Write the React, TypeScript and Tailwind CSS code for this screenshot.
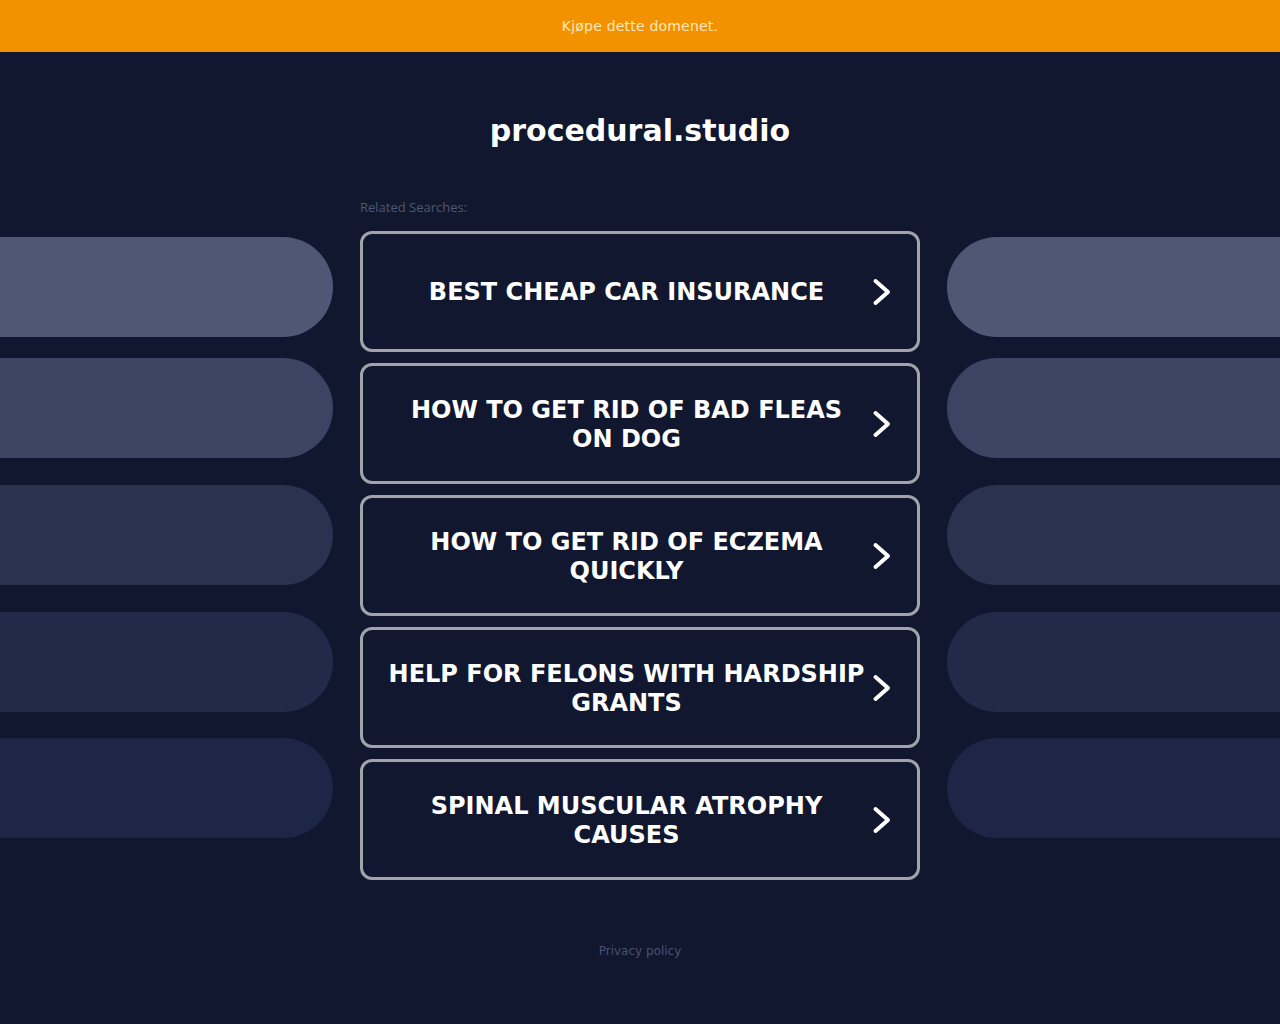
import React from "react";

const items = [
  "BEST CHEAP CAR INSURANCE",
  "HOW TO GET RID OF BAD FLEAS ON DOG",
  "HOW TO GET RID OF ECZEMA QUICKLY",
  "HELP FOR FELONS WITH HARDSHIP GRANTS",
  "SPINAL MUSCULAR ATROPHY CAUSES",
];

const pills = [
  { c: "bg-[#4e5875]", m: "mt-0" },
  { c: "bg-[#3b4462]", m: "mt-[21px]" },
  { c: "bg-[#29324f]", m: "mt-[27px]" },
  { c: "bg-[#212a49]", m: "mt-[27px]" },
  { c: "bg-[#1d2646]", m: "mt-[26px]" },
];

function Chevron() {
  return (
    <svg width="22" height="30" viewBox="0 0 22 30" className="shrink-0">
      <path d="M4.5 4 L17 15 L4.5 26" fill="none" stroke="white" strokeWidth="4" strokeLinecap="round" strokeLinejoin="round" />
    </svg>
  );
}

export default function App() {
  return (
    <div className="min-h-[1024px] bg-[#11172e] font-['DejaVu_Sans',sans-serif]">
      <div className="h-[52px] bg-[#f39200] flex items-center justify-center">
        <span className="text-[14px] text-[#fde7bf] tracking-[0.2px]">Kjøpe dette domenet.</span>
      </div>
      <h1 className="text-center text-white font-bold text-[30px] mt-[59px] leading-[40px]">procedural.studio</h1>
      <div className="flex mt-[49px]">
        <div className="flex-1 flex flex-col pt-[37px]">
          {pills.map((p, i) => (
            <div key={i} className={`h-[100px] rounded-r-[50px] ${p.c} ${p.m}`} />
          ))}
        </div>
        <div className="w-[560px] mx-[27px] shrink-0">
          <div className="text-[13px] text-[#4f5774] font-['Open_Sans',sans-serif] leading-[14px] mb-[17px]">Related Searches:</div>
          <div className="flex flex-col gap-[11px]">
            {items.map((t) => (
              <div key={t} className="h-[121px] border-[3px] border-[#a0a3a8] rounded-[12px] flex items-center pl-[25px] pr-[24px]">
                <div className="flex-1 text-center text-white font-bold text-[24px] leading-[29px] pt-[2px]">{t}</div>
                <div className="w-[28px] flex justify-end">
                  <Chevron />
                </div>
              </div>
            ))}
          </div>
        </div>
        <div className="flex-1 flex flex-col pt-[37px]">
          {pills.map((p, i) => (
            <div key={i} className={`h-[100px] rounded-l-[50px] ${p.c} ${p.m}`} />
          ))}
        </div>
      </div>
      <div className="text-center mt-[62px] text-[12px] text-[#4a5170]">Privacy policy</div>
    </div>
  );
}
